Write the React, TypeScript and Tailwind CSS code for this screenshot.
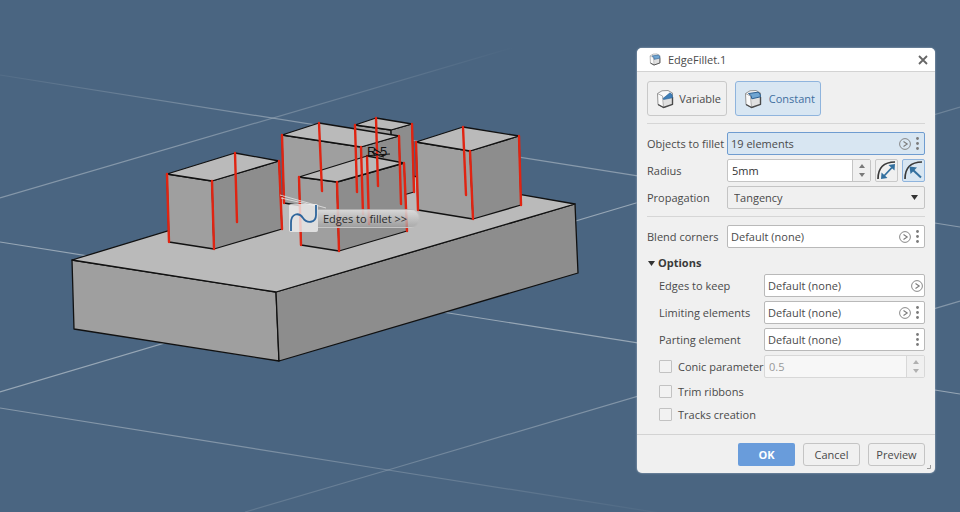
import React from "react";
import type { ReactNode } from "react";

type Point = [number, number];

interface Block {
  left: Point;
  back: Point;
  right: Point;
  front: Point;
  leftBase: Point;
  frontBase: Point;
  rightBase: Point;
}

const base: Block = {
  left: [72, 260],
  back: [372, 169],
  right: [575, 204],
  front: [276, 292],
  leftBase: [74, 329],
  frontBase: [279, 361],
  rightBase: [578, 273],
};

const rearSmall: Block = {
  left: [355, 125],
  back: [376, 118],
  right: [412, 124],
  front: [391, 130],
  leftBase: [357, 192],
  frontBase: [393, 198],
  rightBase: [414, 192],
};

const rearRight: Block = {
  left: [416, 142],
  back: [463, 127],
  right: [519, 136],
  front: [470, 151],
  leftBase: [418, 210],
  frontBase: [473, 219],
  rightBase: [521, 205],
};

const rearLeft: Block = {
  left: [282, 135],
  back: [319, 123],
  right: [399, 136],
  front: [361, 147],
  leftBase: [284, 203],
  frontBase: [363, 216],
  rightBase: [401, 204],
};

const frontLeft: Block = {
  left: [167, 174],
  back: [235, 153],
  right: [279, 161],
  front: [212, 181],
  leftBase: [169, 242],
  frontBase: [214, 249],
  rightBase: [282, 229],
};

const frontCenter: Block = {
  left: [299, 177],
  back: [367, 156],
  right: [404, 163],
  front: [337, 182],
  leftBase: [301, 245],
  frontBase: [339, 251],
  rightBase: [407, 231],
};

const pillars = [rearSmall, rearRight, rearLeft, frontLeft, frontCenter];

const filletEdges: [Point, Point][] = [
  [[376, 118], [378, 186]],
  [[355, 125], [357, 192]],
  [[412, 124], [414, 192]],
  [[463, 127], [466, 195]],
  [[416, 142], [418, 210]],
  [[470, 151], [473, 219]],
  [[519, 136], [521, 205]],
  [[319, 123], [322, 191]],
  [[282, 135], [284, 203]],
  [[361, 147], [363, 214]],
  [[399, 136], [401, 204]],
  [[235, 153], [237, 222]],
  [[167, 174], [169, 242]],
  [[212, 181], [214, 249]],
  [[279, 161], [282, 229]],
  [[367, 156], [369, 224]],
  [[299, 177], [301, 245]],
  [[337, 182], [339, 251]],
  [[404, 163], [407, 231]],
];

const pts = (...p: Point[]) => p.map((q) => q.join(",")).join(" ");

function Solid({ b }: { b: Block }) {
  return (
    <g stroke="#111" strokeWidth="1.3" strokeLinejoin="round">
      <polygon points={pts(b.left, b.front, b.frontBase, b.leftBase)} fill="#9f9f9f" />
      <polygon points={pts(b.front, b.right, b.rightBase, b.frontBase)} fill="#8d8d8d" />
      <polygon points={pts(b.left, b.back, b.right, b.front)} fill="#bababa" />
    </g>
  );
}

function Viewport() {
  return (
    <svg
      className="absolute inset-0 h-full w-full"
      viewBox="0 0 960 512"
      preserveAspectRatio="xMidYMid slice"
      role="img"
      aria-label="3D view"
    >
      <defs>
        <linearGradient id="fadeIn" gradientUnits="userSpaceOnUse" x1="0" y1="0" x2="300" y2="0">
          <stop offset="0" stopColor="#a3b1be" stopOpacity="0.1" />
          <stop offset="1" stopColor="#a3b1be" stopOpacity="0.7" />
        </linearGradient>
        <linearGradient id="fadeOut" gradientUnits="userSpaceOnUse" x1="180" y1="0" x2="515" y2="0">
          <stop offset="0" stopColor="#a3b1be" stopOpacity="0.65" />
          <stop offset="1" stopColor="#a3b1be" stopOpacity="0" />
        </linearGradient>
        <linearGradient id="fadeLow" gradientUnits="userSpaceOnUse" x1="200" y1="0" x2="660" y2="0">
          <stop offset="0" stopColor="#a3b1be" stopOpacity="0.65" />
          <stop offset="1" stopColor="#a3b1be" stopOpacity="0.05" />
        </linearGradient>
        <linearGradient id="fadeRise" gradientUnits="userSpaceOnUse" x1="200" y1="0" x2="640" y2="0">
          <stop offset="0" stopColor="#a3b1be" stopOpacity="0.2" />
          <stop offset="1" stopColor="#a3b1be" stopOpacity="0.65" />
        </linearGradient>
      </defs>
      <g strokeWidth="1.2" fill="none">
        <path d="M0 75L960 227" stroke="url(#fadeIn)" />
        <path d="M0 198L515 47" stroke="url(#fadeOut)" />
        <path d="M0 242L960 394" stroke="#a3b1be" strokeOpacity="0.85" />
        <path d="M0 392L636 203" stroke="#a3b1be" strokeOpacity="0.85" />
        <path d="M636 203L960 107" stroke="#a3b1be" strokeOpacity="0.4" />
        <path d="M0 408L388 470L660 513" stroke="url(#fadeLow)" />
        <path d="M245 512L388 470L960 301" stroke="url(#fadeRise)" />
      </g>
      <Solid b={base} />
      {pillars.map((b, i) => (
        <Solid key={i} b={b} />
      ))}
      <g stroke="#e02412" strokeWidth="2.4" strokeLinecap="round">
        {filletEdges.map(([a, b], i) => (
          <line key={i} x1={a[0]} y1={a[1]} x2={b[0]} y2={b[1]} />
        ))}
      </g>
      <text x="367" y="156" fontSize="13" fill="#111" className="font-['Liberation_Sans',Arial,sans-serif]">
        R 5
      </text>
      <path d="M366 156L376 155L390 154M372 152L380 156L384 157M374 149L381 153" stroke="#111" strokeWidth="1.200" fill="none" />
      <path d="M280 195L326 208M281 198L316 206" stroke="#e6e6e6" strokeOpacity="0.8" fill="none" />
      <foreignObject x="288" y="203" width="140" height="30">
        <button
          type="button"
          className="flex h-[30px] items-center font-['Open_Sans','Noto_Sans',sans-serif] text-[11px] text-[#2b2b2b]"
        >
          <svg viewBox="0 0 30 30" className="h-[30px] w-[30px] shrink-0">
            <rect x="1" y="1" width="29" height="28" rx="2" fill="#ededed" fillOpacity="0.8" />
            <path
              d="M3 28V20C3 10 11 9 15 15C19 21 28 20 28 12V2"
              fill="none"
              stroke="#2d659c"
              strokeWidth="1.8"
            />
          </svg>
          <span className="h-[19px] rounded-r-full border border-l-0 border-[#bbb]/60 bg-gradient-to-b from-[#dedede]/90 to-[#a5a5a5]/70 pr-3 pl-[5px] leading-[18px] whitespace-nowrap">
            Edges to fillet &gt;&gt;
          </span>
        </button>
      </foreignObject>
    </svg>
  );
}

function CubeIcon({ variable = false, className }: { variable?: boolean; className: string }) {
  return (
    <svg viewBox="0 0 18 20" className={className} aria-hidden="true">
      <path d="M1.500 4.500L6 1.800L12 1.500L16.500 4V15L7.500 18.500L2 15.500Z" fill="#fafafa" stroke="#8a8a8a" strokeWidth="0.9" strokeLinejoin="round" />
      <path d="M7.500 8V18.500L16.500 15.500V8Z" fill="#e0e0e0" />
      <path d="M1.500 4.500L6.500 7L7.500 18.500" fill="none" stroke="#999" strokeWidth="0.8" />
      <path d="M2 15.500L7.500 18.500L16.500 15.300V8" fill="none" stroke="#4a4a4a" strokeWidth="1.4" strokeLinejoin="round" />
      {variable ? (
        <path d="M7 9.500L14 3.800Q16.800 5 16.500 8.800L7.500 10.500Z" fill="#3f7fb8" stroke="#2b5f92" strokeWidth="0.6" />
      ) : (
        <path d="M4.500 4.500L14 3.200Q16.800 4 16.500 7.800L7.800 9.800Q8 6 4.500 4.500Z" fill="#6fa5d2" stroke="#2b5f92" strokeWidth="1" />
      )}
    </svg>
  );
}

function Separator() {
  return <hr className="mt-[7px] mb-2 h-px border-0 bg-[#d6d6d6]" />;
}

function Row({ id, label, children }: { id: string; label: string; children: ReactNode }) {
  return (
    <div className="flex h-[23px] items-center">
      <label htmlFor={id} className="w-20 shrink-0 pt-px whitespace-nowrap">
        {label}
      </label>
      {children}
    </div>
  );
}

function OptionRow({ id, label, children }: { id: string; label: string; children: ReactNode }) {
  return (
    <div className="flex h-[23px] items-center pl-3">
      <label htmlFor={id} className="w-[105px] shrink-0 pt-px whitespace-nowrap">
        {label}
      </label>
      {children}
    </div>
  );
}

interface PickerProps {
  id: string;
  value: string;
  go?: boolean;
  more?: boolean;
  active?: boolean;
}

function Picker({ id, value, go = false, more = false, active = false }: PickerProps) {
  return (
    <div
      className={
        active
          ? "flex h-full min-w-0 flex-1 items-center rounded-[2px] border border-[#6f9cd0] bg-[#d8e6f2] pr-px"
          : "flex h-full min-w-0 flex-1 items-center rounded-[2px] border border-[#b9b9b9] bg-white pr-px"
      }
    >
      <input id={id} readOnly defaultValue={value} className="h-full w-full min-w-0 flex-1 bg-transparent pl-[3px] outline-none" />
      {go && (
        <button type="button" aria-label="Go to selection" className="flex h-full w-[13px] shrink-0 items-center justify-center">
          <svg viewBox="0 0 12 12" className="h-3 w-3 shrink-0" fill="none" stroke="#7c7c7c">
            <circle cx="6" cy="6" r="5.400" strokeWidth="0.9" />
            <path d="M4.500 3.500L8.200 6L4.500 8.500" strokeWidth="1.1" />
          </svg>
        </button>
      )}
      {more && (
        <button type="button" aria-label="More" className="flex h-full w-3 shrink-0 items-center justify-center">
          <svg viewBox="0 0 3 13" className="h-[13px] w-[3px]" fill="#7a7a7a">
            <circle cx="1.500" cy="1.500" r="1.400" />
            <circle cx="1.500" cy="6.500" r="1.400" />
            <circle cx="1.500" cy="11.500" r="1.400" />
          </svg>
        </button>
      )}
    </div>
  );
}

function Stepper({ id, value, disabled = false, label }: { id: string; value: string; disabled?: boolean; label?: string }) {
  return (
    <div
      className={
        disabled
          ? "flex h-full min-w-0 flex-1 rounded-[2px] border border-[#d8d8d8] bg-[#f7f7f7] text-[#9a9a9a]"
          : "flex h-full min-w-0 flex-1 rounded-[2px] border border-[#c4c4c4] bg-white text-[#7a7a7a]"
      }
    >
      <input
        id={id}
        aria-label={label}
        disabled={disabled}
        defaultValue={value}
        className="h-full w-full min-w-0 flex-1 bg-transparent pl-1 text-[#333] outline-none disabled:text-[#999]"
      />
      <div
        className={
          disabled
            ? "flex w-[18px] shrink-0 flex-col border-l border-[#d8d8d8] bg-[#f0f0f0] py-px text-[#b0b0b0]"
            : "flex w-[18px] shrink-0 flex-col border-l border-[#c4c4c4] bg-[#f0f0f0] py-px"
        }
      >
        <button type="button" disabled={disabled} aria-label="Increase" className="flex flex-1 items-center justify-center">
          <svg viewBox="0 0 6 4" className="h-1 w-1.5" fill="currentColor">
            <path d="M3 0L6 4H0Z" />
          </svg>
        </button>
        <button type="button" disabled={disabled} aria-label="Decrease" className="flex flex-1 items-center justify-center">
          <svg viewBox="0 0 6 4" className="h-1 w-1.5" fill="currentColor">
            <path d="M3 4L0 0H6Z" />
          </svg>
        </button>
      </div>
    </div>
  );
}

const checkboxClass = "h-[13px] w-[13px] shrink-0 appearance-none rounded-[1px] border border-[#c2c2c2] bg-[#f2f2f2] checked:bg-[#699cdb]";

function EdgeFilletDialog() {
  return (
    <section
      role="dialog"
      aria-label="EdgeFillet.1"
      className="relative w-[298px] overflow-hidden rounded-[5px] bg-[#f0f0f0] font-['Open_Sans','Noto_Sans',sans-serif] text-[11px] leading-4 text-[#4a4a4a] shadow-[0_0_2px_rgba(220,230,240,0.7)]"
    >
      <header className="flex h-6 items-center border-b border-[#d3d3d3] bg-white pr-[7px] pl-3">
        <CubeIcon className="h-[13px] w-3" />
        <h1 className="ml-[7px] flex-1">EdgeFillet.1</h1>
        <button type="button" aria-label="Close">
          <svg viewBox="0 0 10 10" className="h-2.5 w-2.5" stroke="#666" strokeWidth="1.8">
            <path d="M1 1L9 9M9 1L1 9" />
          </svg>
        </button>
      </header>

      <form className="px-2.5 pt-[9px]" onSubmit={(e) => e.preventDefault()}>
        <div className="flex gap-2">
          <button type="button" className="flex h-[35px] w-20 items-center justify-between rounded-[3px] border border-[#c9c9c9] pr-[5px] pl-2">
            <CubeIcon variable className="h-5 w-[18px]" />
            Variable
          </button>
          <button
            type="button"
            aria-pressed="true"
            className="flex h-[35px] w-[86px] items-center justify-between rounded-[3px] border border-[#8fb4dd] bg-[#d8e6f2] pr-[5px] pl-2 text-[#3f6f9f]"
          >
            <CubeIcon className="h-5 w-[18px]" />
            Constant
          </button>
        </div>

        <Separator />

        <div className="flex flex-col gap-1">
          <Row id="objects" label="Objects to fillet">
            <Picker id="objects" value="19 elements" go more active />
          </Row>
          <Row id="radius" label="Radius">
            <Stepper id="radius" value="5mm" />
            <button
              type="button"
              aria-label="Chordal length"
              className="ml-1 flex h-[23px] w-[23px] shrink-0 items-center justify-center rounded-[2px] border border-[#c9c9c9]"
            >
              <svg viewBox="0 0 21 21" className="h-[21px] w-[21px]" fill="none">
                <path d="M2 19Q2 2 19 2" stroke="#3a3a3a" strokeWidth="1.7" />
                <path d="M8 16L16 7.500" stroke="#33709f" strokeWidth="1.8" />
                <path d="M19 4L18.500 10.500L12.500 5ZM5 19L5.500 12.500L11.500 18Z" fill="#33709f" />
              </svg>
            </button>
            <button
              type="button"
              aria-label="Radius mode"
              aria-pressed="true"
              className="ml-1 flex h-[23px] w-[23px] shrink-0 items-center justify-center rounded-[2px] border border-[#8fb4dd] bg-[#d8e6f2]"
            >
              <svg viewBox="0 0 21 21" className="h-[21px] w-[21px]" fill="none">
                <path d="M2 19Q2 2 19 2" stroke="#3a3a3a" strokeWidth="1.7" />
                <path d="M10 10L18 17.500" stroke="#33709f" strokeWidth="2" />
                <path d="M6.500 6.500L14 7.500L7.500 14Z" fill="#33709f" />
              </svg>
            </button>
          </Row>
          <Row id="propagation" label="Propagation">
            <div className="relative h-full min-w-0 flex-1">
              <select
                id="propagation"
                defaultValue="Tangency"
                className="h-full w-full appearance-none rounded-[2px] border border-[#c4c4c4] bg-[#f0f0f0] px-1.5 outline-none"
              >
                <option>Tangency</option>
              </select>
              <svg viewBox="0 0 7 5" className="pointer-events-none absolute top-[9px] right-[7px] h-[5px] w-[7px]" fill="#333">
                <path d="M0 0H7L3.500 5Z" />
              </svg>
            </div>
          </Row>
        </div>

        <Separator />

        <Row id="blend" label="Blend corners">
          <Picker id="blend" value="Default (none)" go more />
        </Row>

        <details open className="mt-1">
          <summary className="flex h-[22px] list-none items-center gap-[3px] pl-px font-bold text-[#3a3a3a]">
            <svg viewBox="0 0 7 5" className="h-[5px] w-[7px]" fill="#333">
              <path d="M0 0H7L3.500 5Z" />
            </svg>
            Options
          </summary>
          <div className="flex flex-col gap-1">
            <OptionRow id="keep" label="Edges to keep">
              <Picker id="keep" value="Default (none)" go />
            </OptionRow>
            <OptionRow id="limit" label="Limiting elements">
              <Picker id="limit" value="Default (none)" go more />
            </OptionRow>
            <OptionRow id="parting" label="Parting element">
              <Picker id="parting" value="Default (none)" more />
            </OptionRow>
            <div className="flex h-[23px] items-center pl-3">
              <label className="flex w-[105px] shrink-0 items-center gap-1.5 whitespace-nowrap">
                <input type="checkbox" className={checkboxClass} />
                Conic parameter
              </label>
              <Stepper id="conic" value="0.5" label="Conic parameter value" disabled />
            </div>
          </div>
          <div className="mt-0.5 pl-3">
            <label className="flex h-[23px] items-center gap-1.5">
              <input type="checkbox" className={checkboxClass} />
              Trim ribbons
            </label>
            <label className="flex h-[23px] items-center gap-1.5">
              <input type="checkbox" className={checkboxClass} />
              Tracks creation
            </label>
          </div>
        </details>
      </form>

      <footer className="relative mt-2 flex justify-end gap-2 border-t border-[#d3d3d3] px-2.5 pt-2 pb-[7px]">
        <button type="button" className="h-[23px] w-[57px] rounded-[2px] bg-[#699cdb] font-bold text-white">
          OK
        </button>
        <button type="button" className="h-[23px] w-[57px] rounded-[3px] border border-[#c4c4c4]">
          Cancel
        </button>
        <button type="button" className="h-[23px] w-[57px] rounded-[3px] border border-[#c4c4c4]">
          Preview
        </button>
        <svg viewBox="0 0 4 4" className="absolute right-1 bottom-1 h-1 w-1" fill="none" stroke="#999">
          <path d="M3.500 0V3.500H0" />
        </svg>
      </footer>
    </section>
  );
}

export default function App() {
  return (
    <main className="relative flex min-h-screen items-start justify-end overflow-hidden bg-[#4a6581] pt-12 pr-[25px]">
      <Viewport />
      <EdgeFilletDialog />
    </main>
  );
}
